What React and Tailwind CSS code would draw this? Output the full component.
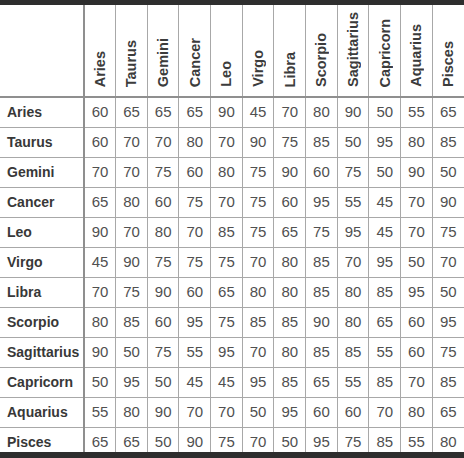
import React from 'react';

const signs = [
  'Aries', 'Taurus', 'Gemini', 'Cancer', 'Leo', 'Virgo',
  'Libra', 'Scorpio', 'Sagittarius', 'Capricorn', 'Aquarius', 'Pisces',
];

const scores = [
  [60, 65, 65, 65, 90, 45, 70, 80, 90, 50, 55, 65],
  [60, 70, 70, 80, 70, 90, 75, 85, 50, 95, 80, 85],
  [70, 70, 75, 60, 80, 75, 90, 60, 75, 50, 90, 50],
  [65, 80, 60, 75, 70, 75, 60, 95, 55, 45, 70, 90],
  [90, 70, 80, 70, 85, 75, 65, 75, 95, 45, 70, 75],
  [45, 90, 75, 75, 75, 70, 80, 85, 70, 95, 50, 70],
  [70, 75, 90, 60, 65, 80, 80, 85, 80, 85, 95, 50],
  [80, 85, 60, 95, 75, 85, 85, 90, 80, 65, 60, 95],
  [90, 50, 75, 55, 95, 70, 80, 85, 85, 55, 60, 75],
  [50, 95, 50, 45, 45, 95, 85, 65, 55, 85, 70, 85],
  [55, 80, 90, 70, 70, 50, 95, 60, 60, 70, 80, 65],
  [65, 65, 50, 90, 75, 70, 50, 95, 75, 85, 55, 80],
];

const App = () => {
  return (
    <div className="w-[464px] h-[458px] flex flex-col overflow-hidden bg-white font-['Liberation_Sans',Arial,sans-serif]">
      <div className="h-[5px] shrink-0 bg-[#2e2e2e]" />

      <div className="flex-1 min-h-0 overflow-hidden">
        <table className="w-[464px] table-fixed border-collapse">
          <colgroup>
            <col className="w-[84px]" />
            {signs.map(s => <col key={s} />)}
          </colgroup>
          <thead>
            <tr className="h-[92px]">
              <th className="border-r-2 border-b-2 border-[#8f8f8f]" />
              {signs.map(sign => (
                <th
                  key={sign}
                  className="align-bottom border-l border-b-2 border-[#a8a8a8] border-b-[#8f8f8f] p-0"
                >
                  <div className="flex justify-center items-end pb-[9px]">
                    <div className="rotate-180 [writing-mode:vertical-rl] text-[14.5px] font-bold leading-[16px] text-[#3c3c3c]">
                      {sign}
                    </div>
                  </div>
                </th>
              ))}
            </tr>
          </thead>
          <tbody>
            {signs.map((sign, i) => (
              <tr key={sign} className="h-[30px]">
                <td className="border-r-2 border-b border-[#a8a8a8] border-r-[#8f8f8f] pl-[7px] text-[14px] font-bold text-[#383838] whitespace-nowrap">
                  {sign}
                </td>
                {scores[i].map((v, j) => (
                  <td
                    key={j}
                    className="border-l border-b border-[#a8a8a8] text-center text-[15px] text-[#505050] p-0"
                  >
                    {v}
                  </td>
                ))}
              </tr>
            ))}
          </tbody>
        </table>
      </div>

      <div className="h-[6px] shrink-0 bg-[#2e2e2e]" />
    </div>
  );
};

export default App;
